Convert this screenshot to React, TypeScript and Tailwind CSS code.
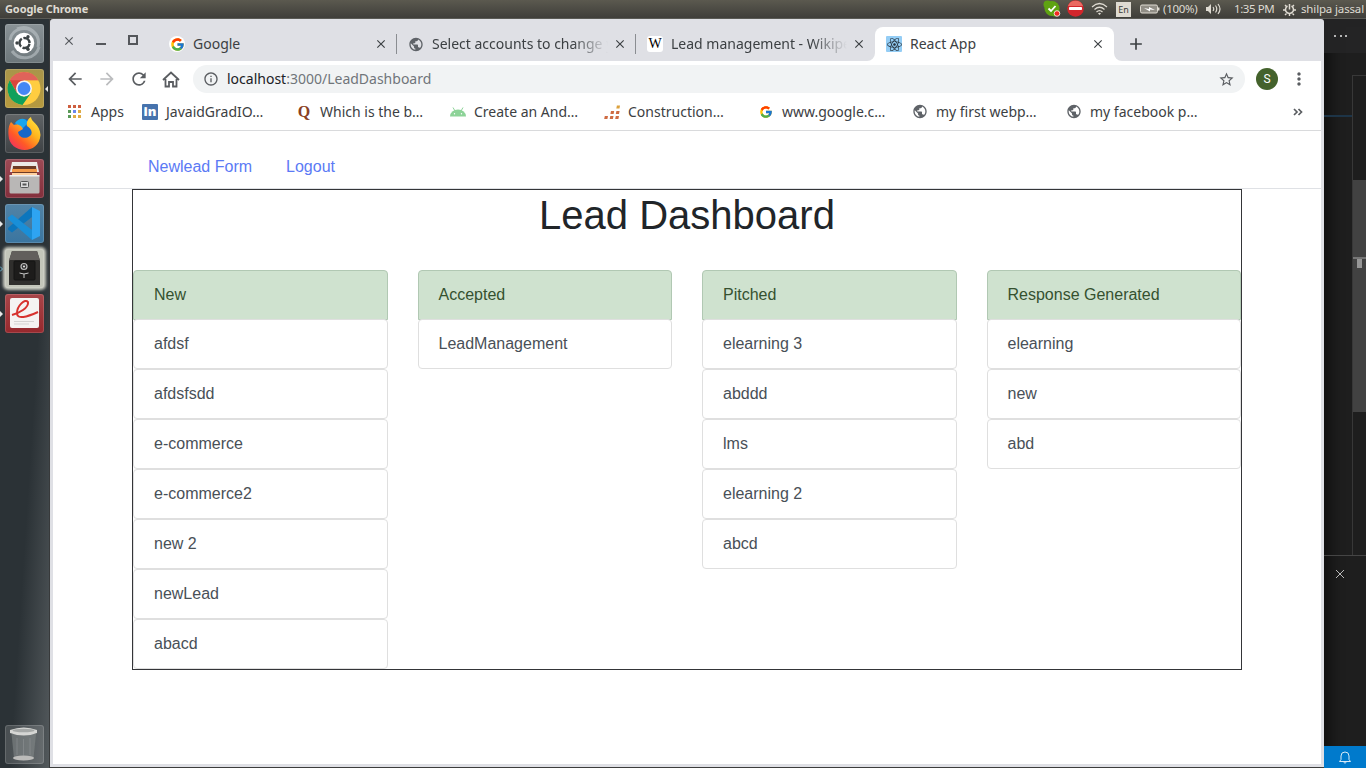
import React from 'react';
import { FcGoogle } from 'react-icons/fc';
import { FaReact, FaFirefoxBrowser } from 'react-icons/fa';
import { MdPublic, MdArrowBack, MdArrowForward, MdRefresh, MdInfoOutline, MdStarBorder, MdMoreVert, MdAdd, MdClose } from 'react-icons/md';

const UI = "font-['Noto_Sans','Open_Sans',sans-serif]";

function UbuntuIcon() {
  return (
    <svg width="39" height="39" viewBox="0 0 39 39">
      <path d="M5 16C7 3 24 1 31 11M34 23C31 35 15 38 7 27M12 5C24 0 36 10 33 23" fill="none" stroke="#c3cacd" strokeWidth="3" opacity=".55" />
      <circle cx="19" cy="19" r="10.3" fill="#fff" />
      <circle cx="19.5" cy="19" r="5" fill="none" stroke="#3c4345" strokeWidth="2.4" strokeDasharray="8.9 1.6" strokeDashoffset="-.8" />
      <circle cx="12" cy="19" r="1.7" fill="#3c4345" />
      <circle cx="23" cy="12.8" r="1.7" fill="#3c4345" />
      <circle cx="23" cy="25.2" r="1.7" fill="#3c4345" />
    </svg>
  );
}

function ChromeIcon() {
  return (
    <svg width="39" height="39" viewBox="0 0 39 39">
      <circle cx="19" cy="19.5" r="16.5" fill="#ffcd40" />
      <path d="M4.7 11.2A16.5 16.5 0 0 1 33.3 11.2H19L11.8 23.7Z" fill="#d9453c" />
      <path d="M4.7 11.2A16.5 16.5 0 0 0 17.5 36L26.2 23.7L19 27.8L11.8 23.7Z" fill="#10a05b" />
      <path d="M4.7 11.2A16.5 16.5 0 0 1 33.3 11.2H19Z" fill="#ee9a93" opacity=".35" />
      <circle cx="19" cy="19.5" r="8" fill="#f4f4f4" />
      <circle cx="19" cy="19.5" r="6.4" fill="#4487f4" />
    </svg>
  );
}

function FirefoxIcon() {
  return (
    <svg width="39" height="39" viewBox="0 0 39 39">
      <defs>
        <linearGradient id="fox" x1="1" y1="0" x2="0.1" y2="1">
          <stop offset="0" stopColor="#fff04a" />
          <stop offset=".4" stopColor="#ffb41d" />
          <stop offset=".7" stopColor="#ff5a26" />
          <stop offset="1" stopColor="#f0286b" />
        </linearGradient>
      </defs>
      <circle cx="19" cy="17" r="12" fill="#1667c9" />
      <path d="M10 9C15 3 21 4 23 9L17 15Z" fill="#18a5ed" />
      <path d="M6 8C7 9 8 10 9 11C12 10 14 11 16 12L18 15L13 18C14 24 21 26 26 21C28 17 25 14 22 12C21 8 23 5 26 3C26 8 35 10 35.500 21C34 42 4 40 3.500 21C3 15 4 11 6 8Z" fill="url(#fox)" />
    </svg>
  );
}

function FilesIcon() {
  return (
    <svg width="39" height="39" viewBox="0 0 39 39">
      <path d="M7 3H32L34 13H5Z" fill="#ece9e7" />
      <path d="M8 7H31L32 17H7Z" fill="#6e3b26" />
      <rect x="7" y="10" width="25" height="3" fill="#f39a4a" />
      <rect x="7" y="14" width="25" height="2" fill="#ffd0a0" />
      <rect x="4.500" y="16" width="30" height="18.500" rx="1.500" fill="#b9b7b6" />
      <rect x="4.500" y="16" width="30" height="1.500" fill="#eee" />
      <rect x="15.500" y="22.500" width="8" height="6" rx="1" fill="#ddd" stroke="#555" />
      <rect x="17.500" y="24.500" width="4" height="2" fill="#555" />
    </svg>
  );
}

function CodeIcon() {
  return (
    <svg width="39" height="39" viewBox="0 0 39 39">
      <path d="M27 3L35 7V32L27 36Z" fill="#2ea4f2" />
      <path d="M27 3V13L7 28.500L3 25.500V24Z" fill="#0c76bd" />
      <path d="M27 36V26L7 10.500L3 13.500V15Z" fill="#198fd8" />
    </svg>
  );
}

function SafeIcon() {
  return (
    <svg width="39" height="39" viewBox="0 0 39 39">
      <path d="M7 2H32L35 12V36H4V12Z" fill="#302f2d" />
      <path d="M7 2H32L35 11H4Z" fill="#625f5c" />
      <rect x="9" y="12" width="21" height="19" rx="1" fill="#1d1c1b" stroke="#141414" />
      <circle cx="19" cy="17.500" r="3" fill="#333" stroke="#bbb" strokeWidth="1.200" />
      <circle cx="19" cy="17.500" r="1" fill="#eee" />
      <path d="M14.500 24L19 25L23.500 24M19 25V29" stroke="#c8c8c8" fill="none" />
    </svg>
  );
}

function ReaderIcon() {
  return (
    <svg width="39" height="39" viewBox="0 0 39 39">
      <rect x="5" y="4" width="29" height="30" rx="2" fill="#f5f3f2" />
      <path d="M7 21C14 19 24 14 23 8C20 4 12 12 12 19C12 26 22 23 33 18" fill="none" stroke="#d7322e" strokeWidth="2" />
      <path d="M9 27.500H29M9 30H24" stroke="#d5d3d2" />
    </svg>
  );
}

function TrashIcon() {
  return (
    <svg width="39" height="39" viewBox="0 0 39 39">
      <path d="M6.500 9L9 33Q19 37 28.500 33L31 9Z" fill="#8a8f90" opacity=".5" />
      <ellipse cx="18.500" cy="33" rx="10.500" ry="2.500" fill="#bcbcba" />
      <path d="M5 5Q19 0 32 5V8Q19 13 5 8Z" fill="#d5d6d4" />
      <ellipse cx="18.500" cy="5.500" rx="11" ry="1.800" fill="#a5a8a7" />
      <path d="M12 13V30M18.500 14V31M25 13V30" stroke="#9da1a2" opacity=".4" />
    </svg>
  );
}

const launcher = [
  { icon: <UbuntuIcon />, bg: 'bg-linear-to-b from-[#899296] to-[#6d777b]', mark: '' },
  { icon: <ChromeIcon />, bg: 'bg-linear-to-b from-[#a8954a] to-[#b79a3e]', mark: 'active' },
  { icon: <FirefoxIcon />, bg: 'bg-linear-to-b from-[#606466] to-[#3e4245]', mark: '' },
  { icon: <FilesIcon />, bg: 'bg-linear-to-b from-[#9c4a55] to-[#832f3c]', mark: 'run' },
  { icon: <CodeIcon />, bg: 'bg-linear-to-b from-[#5183a5] to-[#3a75a0]', mark: 'run' },
  { icon: <SafeIcon />, bg: 'bg-[#c3c6ba] shadow-[0_0_3px_2px_#c9cbc0]', mark: 'blue' },
  { icon: <ReaderIcon />, bg: 'bg-linear-to-b from-[#a84549] to-[#96282d]', mark: 'run' },
];

function Launcher() {
  return (
    <aside className="flex w-[50px] shrink-0 flex-col justify-between border-r border-[#383a3b] bg-linear-to-br from-[#2b3236] from-60% to-[#53595c] pt-[5px] pb-[4px]">
      <div className="flex flex-col gap-[6px]">
        {launcher.map((l, i) => (
          <div key={i} className="flex items-center">
            <div className="flex w-[5px] shrink-0">
              {(l.mark === 'run' || l.mark === 'active') && <svg width="4" height="6"><path d="M0 0L3 3L0 6Z" fill="#e8e8e8" /></svg>}
              {l.mark === 'blue' && <svg width="4" height="6"><path d="M0 0.500L2.500 3L0 5.500" fill="none" stroke="#5fb0d0" /></svg>}
            </div>
            <div className={`size-[39px] shrink-0 overflow-hidden rounded-[3px] ring-1 ring-white/15 ring-inset ${l.bg}`}>{l.icon}</div>
            {l.mark === 'active' && <svg className="shrink-0" width="4" height="6"><path d="M4 0L1 3L4 6Z" fill="#e8e8e8" /></svg>}
          </div>
        ))}
      </div>
      <div className="ml-[5px] size-[39px] overflow-hidden rounded-[3px] bg-white/15 ring-1 ring-white/15 ring-inset"><TrashIcon /></div>
    </aside>
  );
}

function SystemBar() {
  return (
    <header className={`flex h-[19px] shrink-0 items-center border-b border-[#5a5a55] bg-linear-to-b from-[#5b594f] to-[#3f3e3a] text-[#dfdbd2] ${UI}`}>
      <span className="ml-[5px] flex-1 text-[11px] leading-[18px] font-bold tracking-[-0.1px]">Google Chrome</span>
      <svg className="mr-[6px]" width="18" height="18" viewBox="0 0 18 18">
        <circle cx="9" cy="8.500" r="7.500" fill="#5fa312" /><circle cx="4.500" cy="4.500" r="4" fill="#5fa312" /><circle cx="12" cy="12" r="4.500" fill="#5fa312" />
        <path d="M5.500 8.500L8 11L12.500 6" fill="none" stroke="#fff" strokeWidth="1.800" />
        <circle cx="14" cy="13.500" r="2.800" fill="#f22a22" stroke="#fff" strokeWidth=".8" />
      </svg>
      <svg className="mr-[7px]" width="17" height="18" viewBox="0 0 17 18">
        <circle cx="8.500" cy="8.500" r="8.300" fill="#d3262c" /><path d="M1 6A8 8 0 0 1 16 6Z" fill="#ea6a62" /><rect x="2" y="7" width="13" height="3" rx=".8" fill="#fff" />
      </svg>
      <svg className="mr-[8px]" width="17" height="14" viewBox="0 0 17 14" fill="none" stroke="#dfdbd2">
        <path d="M1 5Q8.500-2 16 5M3.500 7.500Q8.500 3 13.500 7.500M5.500 10Q8.500 7.200 11.500 10" strokeWidth="1.200" /><path d="M7 11.500L8.500 13L10 11.500Q8.500 10.200 7 11.500Z" fill="#dfdbd2" stroke="none" />
      </svg>
      <span className="mr-[9px] h-[15px] w-[15px] bg-[#dfdbd2] text-center text-[9px] leading-[15px] text-[#3c3b37]">En</span>
      <svg className="mr-[3px]" width="20" height="10" viewBox="0 0 20 10">
        <rect x=".5" y="1" width="17" height="8" rx="1.500" fill="#918e86" stroke="#dfdbd2" /><path d="M18 3.500H19.500V6.500H18Z" fill="#dfdbd2" /><path d="M4 4L9 5V3L15 6L10 5.500V7.500Z" fill="#fff" />
      </svg>
      <span className="w-[43px] text-[11.5px] leading-[18px] tracking-[-0.3px] whitespace-nowrap">(100%)</span>
      <svg className="mr-[12px]" width="16" height="12" viewBox="0 0 16 12" fill="none" stroke="#dfdbd2">
        <path d="M0 4H2L5 1V11L2 8H0Z" fill="#dfdbd2" stroke="none" /><path d="M7 4Q8.500 6 7 8M9.500 2.500Q12 6 9.500 9.500M12 1Q16 6 12 11" strokeWidth="1.200" />
      </svg>
      <span className="w-[49px] text-[11.5px] leading-[18px] tracking-[-0.4px] whitespace-nowrap">1:35 PM</span>
      <svg className="mr-[5px]" width="13" height="13" viewBox="0 0 13 13" fill="none" stroke="#dfdbd2">
        <path d="M4.500 3A4 4 0 1 0 8.500 3" strokeWidth="1.500" /><path d="M6.500 1V6.500" strokeWidth="1.500" /><path d="M2 2L3.500 3.500M11 2L9.500 3.500M0 7H2.500M10.500 7H13M2 12L3.500 10.500M11 12L9.500 10.500M6.500 11V13" strokeWidth="1.400" />
      </svg>
      <span className="w-[65px] text-[11.5px] leading-[18px] tracking-[-0.15px] whitespace-nowrap">shilpa jassal</span>
    </header>
  );
}

const fade = 'mask-r-from-75%';
const tabs = [
  { title: 'Google', icon: <span className="flex size-4 items-center justify-center rounded-full bg-white"><FcGoogle size={15} /></span>, long: false },
  { title: 'Select accounts to change your', icon: <MdPublic size={17} color="#5f6368" />, long: true },
  { title: 'Lead management - Wikipedia', icon: <span className="size-4 rounded-[3px] bg-white text-center font-['Liberation_Serif',serif] text-[14px] leading-4 text-black">W</span>, long: true },
  { title: 'React App', icon: <span className="flex size-4 items-center justify-center rounded-[1px] bg-[#94cdf5]"><FaReact size={15} color="#25303a" /></span>, long: false },
];

function TabStrip() {
  return (
    <div className="flex h-[42px] shrink-0 pt-[8px]">
      <div className="flex w-[105px] shrink-0 gap-[20px] pt-[7px] pl-[10px] text-[#54575b]">
        <MdClose size={14} className="-mx-px" />
        <svg width="12" height="14"><path d="M1 10H11" stroke="currentColor" strokeWidth="2" /></svg>
        <svg width="12" height="14"><rect x="2" y="2" width="8" height="8" fill="none" stroke="currentColor" strokeWidth="2" /></svg>
      </div>
      {tabs.map((t, i) => (
        <div key={t.title} className={`relative flex h-[34px] w-[239px] shrink-0 items-center pl-[11px] ${i === 3 ? 'rounded-t-[8px] bg-white' : ''}`}>
          <span className="flex size-4 shrink-0 items-center justify-center">{t.icon}</span>
          <span className={`ml-2 w-[176px] shrink-0 overflow-hidden text-[14px] leading-[20px] whitespace-nowrap text-[#3c4043] ${t.long ? 'mask-r-from-80%' : ''}`}>{t.title}</span>
          <MdClose size={14} className="ml-[5px] shrink-0" color="#3c4043" />
          {i < 2 && <span className="absolute top-[7px] right-0 h-[20px] w-px bg-[#8a8d91]" />}
          {i === 3 && (
            <>
              <svg className="absolute bottom-0 -left-2" width="8" height="8"><path d="M8 0V8H0A8 8 0 0 0 8 0Z" fill="#fff" /></svg>
              <svg className="absolute -right-2 bottom-0" width="8" height="8"><path d="M0 0V8H8A8 8 0 0 1 0 0Z" fill="#fff" /></svg>
            </>
          )}
        </div>
      ))}
      <MdAdd size={20} color="#3c4043" className="mt-[7px] ml-[12px]" />
    </div>
  );
}

function AddressBar() {
  return (
    <div className="flex h-[36px] shrink-0 items-center bg-white text-[#5a5d61]">
      <div className="flex w-[140px] items-center gap-[12px] pl-[12px]">
        <MdArrowBack size={20} />
        <MdArrowForward size={20} color="#bbbcbe" />
        <MdRefresh size={20} />
        <svg width="20" height="20" viewBox="0 0 20 20" fill="none" stroke="currentColor" strokeWidth="1.800"><path d="M2 10.500L10 3L18 10.500M4.500 9.500V17H8V12.500H12V17H15.500V9.500" transform="translate(0 0.500)" /></svg>
      </div>
      <div className="flex h-[28px] w-[1052px] items-center rounded-full bg-[#f1f3f4] px-[10px]">
        <MdInfoOutline size={16} />
        <span className="ml-[8px] flex-1 text-[14px] leading-[20px] text-[#70757a]"><span className="text-[#202124]">localhost</span>:3000/LeadDashboard</span>
        <MdStarBorder size={17} />
      </div>
      <span className="ml-[11px] size-[22px] rounded-full bg-[#44622c] text-center font-['Roboto',sans-serif] text-[12px] leading-[22px] text-white">S</span>
      <MdMoreVert size={20} className="ml-[11px]" />
    </div>
  );
}

function AndroidHead() {
  return (
    <svg width="16" height="16" viewBox="0 0 16 16">
      <path d="M0 12.500A8 7 0 0 1 16 12.500Z" fill="#8dd398" /><path d="M3 3.500L5 7M13 3.500L11 7" stroke="#8dd398" /><circle cx="4.500" cy="9.800" r=".7" fill="#fff" /><circle cx="11.500" cy="9.800" r=".7" fill="#fff" />
    </svg>
  );
}

function Blocks() {
  return (
    <svg width="16" height="16" viewBox="0 0 16 16" fill="#cf6b42">
      <path d="M.8 12H4L3.400 15H.2ZM6.300 12H9.500L8.900 15H5.700ZM11.800 12H15L14.400 15H11.200ZM7 7H10.200L9.600 10H6.400ZM12.400 7H15.600L15 10H11.800Z" /><path d="M12.900 1.500H16L15.500 4.500H12.300Z" fill="#dca13c" />
    </svg>
  );
}

const bookmarks = [
  { t: 'JavaidGradIO…', icon: <span className="size-4 rounded-[1px] bg-[#4673ad] text-center font-['Open_Sans',sans-serif] text-[13px] leading-[14px] font-extrabold text-white">in</span> },
  { t: 'Which is the b…', icon: <span className="font-['Liberation_Serif',serif] text-[16px] leading-4 font-bold text-[#8a4122]">Q</span> },
  { t: 'Create an And…', icon: <AndroidHead /> },
  { t: 'Construction…', icon: <Blocks /> },
  { t: 'www.google.c…', icon: <FcGoogle size={14} /> },
  { t: 'my first webp…', icon: <MdPublic size={17} color="#5f6368" /> },
  { t: 'my facebook p…', icon: <MdPublic size={17} color="#5f6368" /> },
];

const dots = ['#ce5f3f', '#ce5f3f', '#ce5f3f', '#5a9a58', '#6a86ee', '#dfab45', '#5a9a58', '#dfab45', '#dfab45'];

function Bookmarks() {
  return (
    <div className="flex h-[34px] shrink-0 items-center border-b border-[#d9dadc] bg-white pb-[4px] text-[14px] leading-[20px] whitespace-nowrap text-[#3c4043]">
      <div className="flex w-[89px] items-center pl-[15px]">
        <div className="mr-[10px] grid grid-cols-3 gap-[2px]">
          {dots.map((c, i) => <span key={i} className="size-[3px]" style={{ background: c }} />)}
        </div>
        Apps
      </div>
      {bookmarks.map((b) => (
        <div key={b.t} className="flex w-[154px] items-center gap-2">
          <span className="flex size-4 shrink-0 items-center justify-center">{b.icon}</span>
          <span>{b.t}</span>
        </div>
      ))}
      <svg className="ml-[73px]" width="10" height="8" viewBox="0 0 10 8" fill="none" stroke="#5a5d61" strokeWidth="1.700"><path d="M1 1L4 4L1 7M5.500 1L8.500 4L5.500 7" /></svg>
    </div>
  );
}

const columns = [
  { title: 'New', items: ['afdsf', 'afdsfsdd', 'e-commerce', 'e-commerce2', 'new 2', 'newLead', 'abacd'] },
  { title: 'Accepted', items: ['LeadManagement'] },
  { title: 'Pitched', items: ['elearning 3', 'abddd', 'lms', 'elearning 2', 'abcd'] },
  { title: 'Response Generated', items: ['elearning', 'new', 'abd'] },
];

function Dashboard() {
  return (
    <main className="flex-1 bg-white font-['Liberation_Sans',Arial,sans-serif] text-[16px] leading-[24px]">
      <nav className="flex h-[58px] gap-[34px] border-b border-[#dfe1e5] pt-[24px] pl-[95px] text-[#5b7af5]">
        <a>Newlead Form</a>
        <a>Logout</a>
      </nav>
      <section className="ml-[79px] w-[1110px] border border-[#343538]">
        <h1 className="pt-px text-center text-[40px] leading-[48px] text-[#212529]">Lead Dashboard</h1>
        <div className="mt-[31px] grid grid-cols-4 items-start gap-[30px]">
          {columns.map((c) => (
            <div key={c.title}>
              <div className="h-[50px] rounded-t-[4px] border border-[#b1c8b3] bg-[#cfe2cf] px-[20px] pt-[12px] text-[#35512f]">{c.title}</div>
              {c.items.map((t, i) => (
                <div key={t} className={`rounded-[4px] border border-[#dfdfdf] bg-white px-[20px] text-[#495057] ${i === 0 ? '-mt-px h-[50px] pt-[12px]' : 'h-[50px] pt-[12px]'}`}>{t}</div>
              ))}
            </div>
          ))}
        </div>
      </section>
    </main>
  );
}

function EditorEdge() {
  return (
    <aside className="flex w-[42px] shrink-0 flex-col bg-[#1e1e1e] shadow-[inset_14px_0_14px_-8px_#0008]">
      <div className="flex h-[34px] justify-center bg-[#252526]/90 pt-[16px]">
        <svg className="-ml-2" width="14" height="3" fill="#b5b5b5"><rect x="0" width="2" height="2" /><rect x="6" width="2" height="2" /><rect x="11" width="2" height="2" /></svg>
      </div>
      <div className="flex h-[503px] border-b border-[#454545]">
        <div className="w-[28px] pt-[62px]"><div className="h-[2px] bg-[#1d3447]" /></div>
        <div className="mt-[22px] flex-1 border-t border-l border-[#383838] pt-[104px]">
          <div className="h-[232px] bg-[#424242] pt-[77px]">
            <div className="h-[2px] bg-[#767676]" />
            <div className="ml-[4px] h-[9px] w-[5px] bg-[#969696]" />
          </div>
        </div>
      </div>
      <div className="flex-1 pt-[13px] pl-[11px]"><svg width="10" height="10" stroke="#b9b9b9"><path d="M1 1L9 9M9 1L1 9" /></svg></div>
      <div className="flex h-[22px] items-center justify-center bg-[#007acc]">
        <svg className="-ml-px" width="12" height="13" viewBox="0 0 12 13" fill="none" stroke="#d8e9f6"><path d="M.5 10.500H11.500L10 8.500V5A4 4 0 0 0 2 5V8.500ZM4.500 11Q6 13.500 7.500 11" /></svg>
      </div>
    </aside>
  );
}

export default function App() {
  return (
    <div className="flex h-[768px] w-[1366px] flex-col overflow-hidden bg-[#1e1e1e]">
      <SystemBar />
      <div className="flex min-h-0 flex-1">
        <Launcher />
        <div className={`flex w-[1274px] shrink-0 flex-col rounded-t-[3px] border-b border-[#3c3d3c] bg-[#dfe0e5] ${UI}`}>
          <div className="flex min-h-0 flex-1 flex-col px-[3px] pb-[3px]">
            <TabStrip />
            <AddressBar />
            <Bookmarks />
            <Dashboard />
          </div>
        </div>
        <EditorEdge />
      </div>
    </div>
  );
}
